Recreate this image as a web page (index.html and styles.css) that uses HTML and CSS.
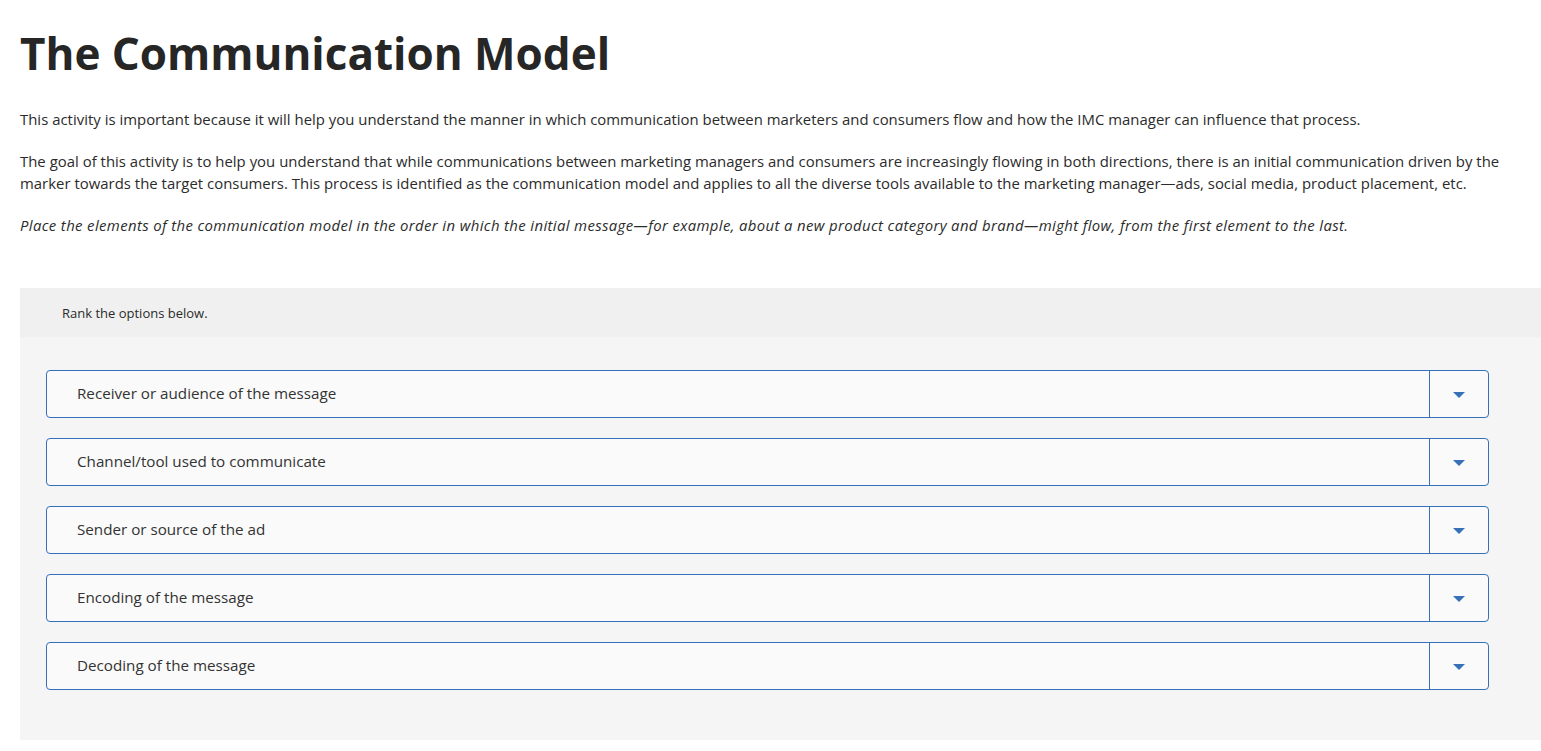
FILE: index.html
```html
<!DOCTYPE html>
<html>
<head>
<meta charset="utf-8">
<link rel="stylesheet" href="styles.css">
</head>
<body>
<main class="page">
  <h1 class="title">The Communication Model</h1>
  <p class="para">This activity is important because it will help you understand the manner in which communication between marketers and consumers flow and how the IMC manager can influence that process.</p>
  <p class="para">The goal of this activity is to help you understand that while communications between marketing managers and consumers are increasingly flowing in both directions, there is an initial communication driven by the marker towards the target consumers. This process is identified as the communication model and applies to all the diverse tools available to the marketing manager—ads, social media, product placement, etc.</p>
  <p class="para italic">Place the elements of the communication model in the order in which the initial message—for example, about a new product category and brand—might flow, from the first element to the last.</p>

  <section class="panel">
    <div class="panel-head">Rank the options below.</div>
    <div class="panel-body">
      <div class="row"><span class="label">Receiver or audience of the message</span><span class="btn"><span class="caret"></span></span></div>
      <div class="row"><span class="label">Channel/tool used to communicate</span><span class="btn"><span class="caret"></span></span></div>
      <div class="row"><span class="label">Sender or source of the ad</span><span class="btn"><span class="caret"></span></span></div>
      <div class="row"><span class="label">Encoding of the message</span><span class="btn"><span class="caret"></span></span></div>
      <div class="row"><span class="label">Decoding of the message</span><span class="btn"><span class="caret"></span></span></div>
    </div>
  </section>
</main>
</body>
</html>
```
FILE: styles.css
```css
html, body {
  margin: 0;
  padding: 0;
  background: #ffffff;
}
body {
  font-family: "Open Sans", Lato, "Liberation Sans", sans-serif;
  color: #2b2b2b;
}
.page {
  padding: 0 0 0 20px;
}
.title {
  margin: 0;
  padding-top: 24px;
  font-size: 44px;
  line-height: 58px;
  font-weight: 700;
  color: #262626;
}
.para {
  margin: 0;
  font-size: 14.9px;
  line-height: 22px;
  letter-spacing: 0.02px;
  color: #2b2b2b;
  padding-right: 20px;
}
.title + .para {
  margin-top: 26px;
}
.para + .para {
  margin-top: 20px;
}
.italic {
  font-style: italic;
  letter-spacing: 0.37px;
}
.panel {
  margin-top: 52px;
  background: #f5f5f5;
}
.panel-head {
  background: #f0f0f0;
  height: 49px;
  line-height: 50px;
  padding-left: 42px;
  font-size: 13px;
  color: #2b2b2b;
}
.panel-body {
  padding: 33px 52px 50px 26px;
  display: flex;
  flex-direction: column;
  gap: 20px;
}
.row {
  display: flex;
  align-items: stretch;
  height: 46px;
  border: 1px solid #3570b9;
  border-radius: 4px;
  background: #fafafa;
}
.label {
  flex: 1;
  display: flex;
  align-items: center;
  padding-left: 30px;
  padding-bottom: 3px;
  font-size: 15.2px;
  color: #333333;
}
.btn {
  width: 58px;
  border-left: 1px solid #3570b9;
  display: flex;
  align-items: center;
  justify-content: center;
}
.caret {
  width: 0;
  height: 0;
  border-left: 6px solid transparent;
  border-right: 6px solid transparent;
  border-top: 6px solid #3570b9;
  margin-top: 2px;
}
```
